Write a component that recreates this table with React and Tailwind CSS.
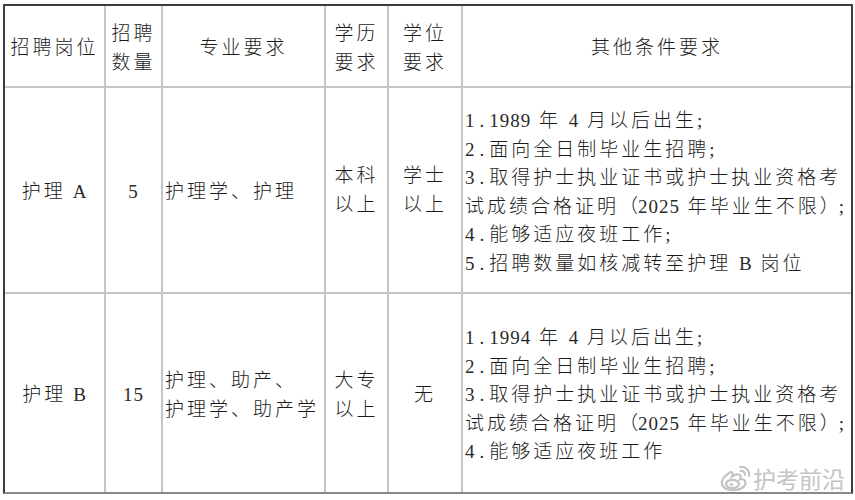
import React from "react";

const N = ({ children, className = "" }) => <span className={"tracking-[1px] text-[#2a2a2a] " + className}>{children}</span>;
const P = ({ children }) => <span className="tracking-[5px] text-[#2a2a2a]">{children}</span>;
const Z = ({ children }) => <span className="tracking-[0px]">{children}</span>;

const Cell = ({ children, className = "" }) => (
  <div className={"bg-white flex items-center pt-[5px] " + className}>{children}</div>
);

export default function App() {
  return (
    <div className="w-[855px] h-[500px] bg-white relative pl-[3px] pt-[4px] text-[#1c1c1c] font-['Liberation_Serif','Noto_Sans_CJK_SC',serif] font-light text-[19px] tracking-[3px] leading-[28.5px]">
      <div className="w-[850px] h-[490px] border-2 border-[#3c3c3c] border-b-[#8a8a8a] grid grid-cols-[99px_55px_161px_61px_72px_388px] grid-rows-[80px_204px_198px] gap-[2px] bg-[#c6c6c6]">
        {/* header */}
        <Cell className="justify-center text-center">招聘岗位</Cell>
        <Cell className="justify-center text-center">
          <div>招聘<br />数量</div>
        </Cell>
        <Cell className="justify-center text-center">专业要求</Cell>
        <Cell className="justify-center text-center">
          <div>学历<br />要求</div>
        </Cell>
        <Cell className="justify-center text-center">
          <div>学位<br />要求</div>
        </Cell>
        <Cell className="justify-center text-center">其他条件要求</Cell>

        {/* row A */}
        <Cell className="justify-center text-center">护理<N className="ml-[7px]">A</N></Cell>
        <Cell className="justify-center text-center"><N>5</N></Cell>
        <Cell className="pl-[2px] whitespace-nowrap">护理学、护理</Cell>
        <Cell className="justify-center text-center">
          <div className="-mt-[4px]">本科<br />以上</div>
        </Cell>
        <Cell className="justify-center text-center">
          <div className="-mt-[4px]">学士<br />以上</div>
        </Cell>
        <Cell className="pl-[2px] whitespace-nowrap">
          <div>
            <div><P>1.</P><N>1989</N> 年 <N>4</N> 月以后出生<N>;</N></div>
            <div><P>2.</P>面向全日制毕业生招聘<N>;</N></div>
            <div><P>3.</P>取得护士执业证书或护士执业资格考</div>
            <div>试成绩合格证明<Z>（</Z><N>2025</N> 年毕业生不限<Z>）</Z><N>;</N></div>
            <div><P>4.</P>能够适应夜班工作<N>;</N></div>
            <div><P>5.</P>招聘数量如核减转至护理 <N>B</N> 岗位</div>
          </div>
        </Cell>

        {/* row B */}
        <Cell className="justify-center text-center">护理<N className="ml-[7px]">B</N></Cell>
        <Cell className="justify-center text-center"><N>15</N></Cell>
        <Cell className="pl-[2px] whitespace-nowrap">
          <div>护理、助产、<br />护理学、助产学</div>
        </Cell>
        <Cell className="justify-center text-center">
          <div>大专<br />以上</div>
        </Cell>
        <Cell className="justify-center text-center">无</Cell>
        <Cell className="pl-[2px] whitespace-nowrap">
          <div>
            <div><P>1.</P><N>1994</N> 年 <N>4</N> 月以后出生<N>;</N></div>
            <div><P>2.</P>面向全日制毕业生招聘<N>;</N></div>
            <div><P>3.</P>取得护士执业证书或护士执业资格考</div>
            <div>试成绩合格证明<Z>（</Z><N>2025</N> 年毕业生不限<Z>）</Z><N>;</N></div>
            <div><P>4.</P>能够适应夜班工作</div>
          </div>
        </Cell>
      </div>

      {/* watermark */}
      <div className="absolute left-[720px] top-[464px] flex items-center gap-[1px] text-[#c4c4c4] font-['Noto_Sans_CJK_SC',sans-serif] font-normal text-[23px] tracking-normal leading-none [text-shadow:0_0_1px_#ffffff,0_0_2px_#ffffff]">
        <svg width="32" height="28" viewBox="0 0 32 28" fill="none" stroke="#c4c4c4" strokeWidth="2.2" strokeLinecap="round">
          <path d="M11 8 C5 11 1 16 2 20 C3 25 10 27 16 26 C23 25 27 21 25 17 C24 15 22 15 20 15.5 C21 13 21 11 19 10.5 C17 10 14 11 12 12.5 C13 10 13 8 11 8 Z" />
          <ellipse cx="12.5" cy="20" rx="6.5" ry="4.2" />
          <circle cx="11.5" cy="20.5" r="1.6" fill="#c4c4c4" stroke="none" />
          <path d="M20 3 C25 2 30 6 29 12" />
          <path d="M20.5 7 C23 6.5 25.5 8.5 25 11" />
        </svg>
        <span>护考前沿</span>
      </div>
    </div>
  );
}
